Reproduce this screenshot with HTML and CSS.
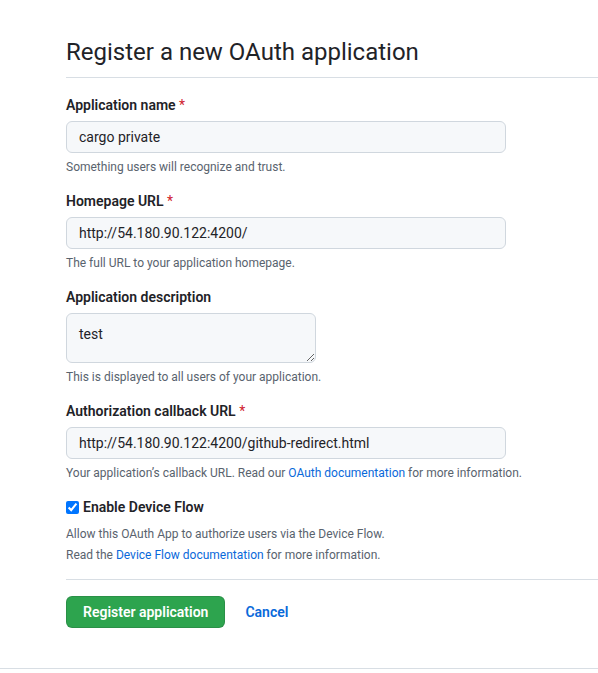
FILE: index.html
```html
<!DOCTYPE html>
<html lang="en">
<head>
<meta charset="utf-8">
<title>Register a new OAuth application</title>
<link rel="stylesheet" href="styles.css">
</head>
<body>
<div class="page">
  <div class="content">
    <div class="subhead">
      <h1 class="subhead-title">Register a new OAuth application</h1>
    </div>
    <form class="form">
      <div class="group">
        <label class="label">Application name <span class="req">*</span></label>
        <input class="input" type="text" value="cargo private">
        <p class="note">Something users will recognize and trust.</p>
      </div>
      <div class="group">
        <label class="label">Homepage URL <span class="req">*</span></label>
        <input class="input" type="text" value="http://54.180.90.122:4200/">
        <p class="note">The full URL to your application homepage.</p>
      </div>
      <div class="group">
        <label class="label">Application description</label>
        <textarea class="textarea">test</textarea>
        <p class="note">This is displayed to all users of your application.</p>
      </div>
      <div class="group">
        <label class="label">Authorization callback URL <span class="req">*</span></label>
        <input class="input" type="text" value="http://54.180.90.122:4200/github-redirect.html">
        <p class="note">Your application’s callback URL. Read our <a class="link" href="#">OAuth documentation</a> for more information.</p>
      </div>
      <div class="check-group">
        <label class="check-label"><input class="checkbox" type="checkbox" checked> Enable Device Flow</label>
        <p class="note note-first">Allow this OAuth App to authorize users via the Device Flow.</p>
        <p class="note note-tight">Read the <a class="link" href="#">Device Flow documentation</a> for more information.</p>
      </div>
      <div class="actions">
        <button class="btn-primary" type="button">Register application</button>
        <a class="btn-link" href="#">Cancel</a>
      </div>
    </form>
  </div>
  <div class="footer-rule"></div>
</div>
</body>
</html>
```
FILE: styles.css
```css
* { box-sizing: border-box; }
html, body { margin: 0; padding: 0; background: #ffffff; }
body {
  font-family: Roboto, "Liberation Sans", sans-serif;
  color: #1f2328;
  font-size: 14px;
  line-height: 1.5;
}
.page { width: 598px; }
.content { padding-left: 66px; }
.subhead {
  padding-top: 34px;
  padding-bottom: 7px;
  border-bottom: 1px solid #d8dee4;
}
.subhead-title {
  margin: 0;
  font-size: 24px;
  font-weight: 400;
  line-height: 36px;
  color: #1f2328;
}
.form { padding-top: 17px; }
.group { margin-bottom: 15px; display: flex; flex-direction: column; align-items: flex-start; }
.label {
  font-weight: 600;
  font-size: 14px;
  line-height: 21px;
  margin-bottom: 5px;
}
.req { color: #cf222e; font-weight: 400; }
.input, .textarea {
  font-family: inherit;
  font-size: 14px;
  color: #1f2328;
  background: #f6f8fa;
  border: 1px solid #d0d7de;
  border-radius: 6px;
  padding: 5px 12px;
  line-height: 20px;
  outline: none;
}
.input { width: 440px; height: 32px; }
.textarea { width: 250px; height: 50px; padding-top: 10px; resize: vertical; }
.note {
  margin: 5px 0 0;
  font-size: 12px;
  line-height: 18px;
  color: #59636e;
}
.link { color: #0969da; text-decoration: none; }
.check-label {
  display: flex;
  align-items: center;
  font-weight: 600;
  font-size: 14px;
  line-height: 21px;
  gap: 4px;
}
.checkbox { margin: 0; width: 13px; height: 13px; accent-color: #0075ff; }
.note-first { margin-top: 7px; }
.note-tight { margin-top: 3px; }
.actions {
  margin-top: 15px;
  padding-top: 16px;
  border-top: 1px solid #d8dee4;
  display: flex;
  align-items: center;
  gap: 20px;
}
.btn-primary {
  font-family: inherit;
  font-size: 14px;
  font-weight: 600;
  color: #ffffff;
  background: #2da44e;
  border: 1px solid rgba(27,31,36,0.15);
  border-radius: 6px;
  height: 32px;
  padding: 0 16px;
  white-space: nowrap;
  cursor: pointer;
}
.btn-link { color: #0969da; text-decoration: none; font-weight: 600; font-size: 14px; }
.footer-rule { margin-top: 40px; border-top: 1px solid #d8dee4; }
```
